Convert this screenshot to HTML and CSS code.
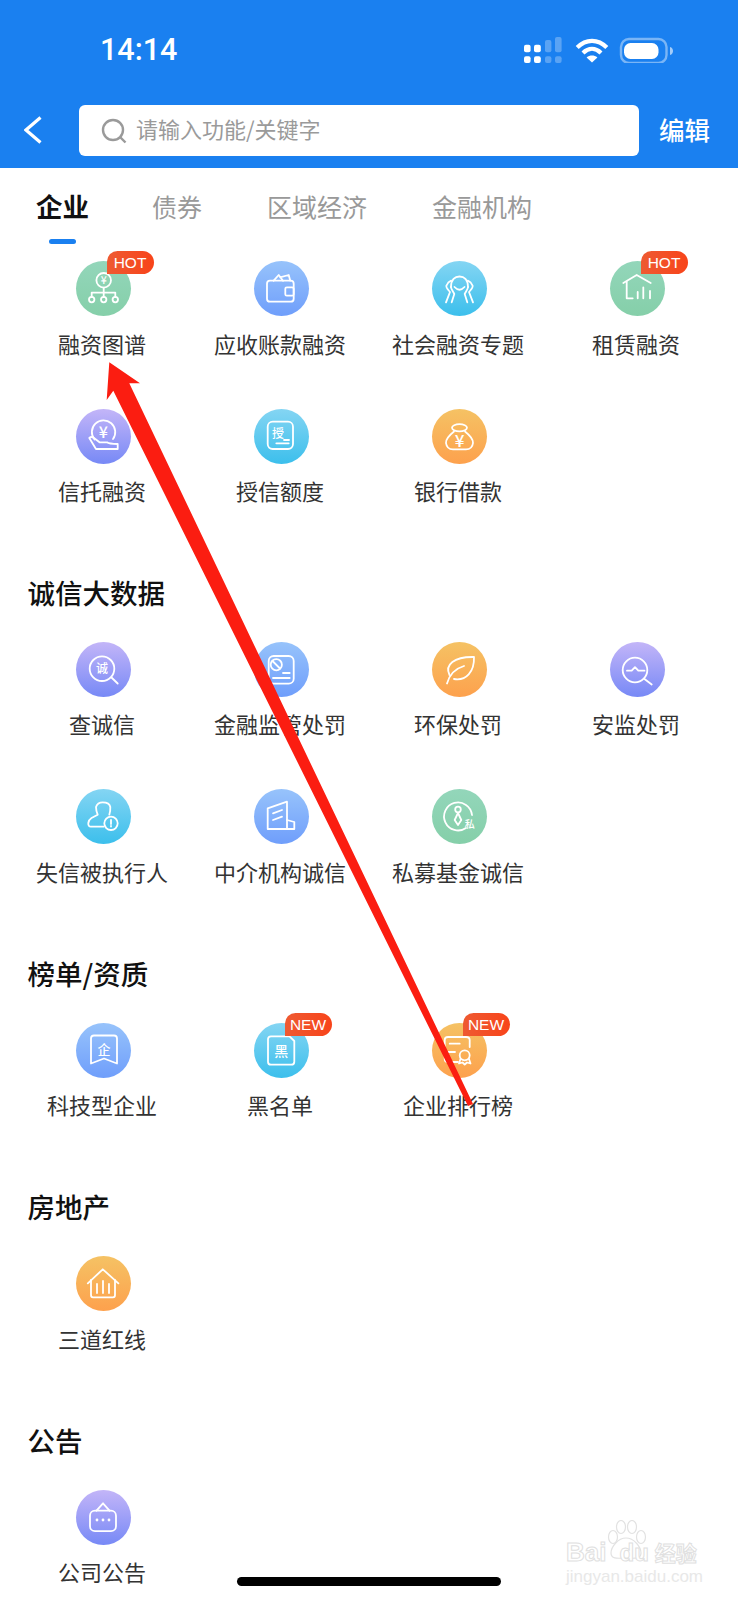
FILE: index.html
```html
<!DOCTYPE html>
<html lang="zh-CN">
<head>
    <meta charset="UTF-8">
    <meta name="viewport" content="width=device-width, initial-scale=1.0">
    <title>全部功能</title>
    <link rel="stylesheet" href="styles.css">
</head>
<body>
    <header class="app-header">
        <div class="status-bar">
            <span class="clock">14:14</span>
            <svg class="status-icons" width="150" height="26" viewBox="0 0 150 26">
                <!-- signal -->
                <g fill="#fff">
                    <rect x="0" y="7.7" width="6.6" height="7.6" rx="2"/>
                    <rect x="10" y="7.7" width="6.8" height="7.6" rx="2"/>
                    <rect x="0" y="19.3" width="6.6" height="6.7" rx="2"/>
                    <rect x="10" y="19.3" width="6.8" height="6.7" rx="2"/>
                </g>
                <g fill="#fff" opacity="0.28">
                    <rect x="21" y="3" width="6.4" height="12.3" rx="2"/>
                    <rect x="31" y="0" width="6.6" height="15.3" rx="2"/>
                    <rect x="21" y="19.3" width="6.4" height="6.7" rx="2"/>
                    <rect x="31" y="19.3" width="6.6" height="6.7" rx="2"/>
                </g>
                <!-- wifi -->
                <g fill="none" stroke="#fff" stroke-width="4.2">
                    <path d="M53.2 10.5 C62 1.6 74 1.6 82.8 10.5"/>
                    <path d="M59 16 C64.5 10.6 71.5 10.6 77 16"/>
                </g>
                <path d="M62.6 20.4 C65.8 17.8 70.2 17.8 73.4 20.4 L68 25.4 Z" fill="#fff"/>
                <!-- battery -->
                <rect x="97" y="2" width="45.5" height="24" rx="8" fill="none" stroke="#fff" stroke-opacity="0.42" stroke-width="2.4"/>
                <rect x="100" y="6" width="34.5" height="16" rx="6.5" fill="#fff"/>
                <path d="M146 10 C150 11 150 17 146 18 Z" fill="#fff" opacity="0.6"/>
            </svg>
        </div>
        <div class="nav-bar">
            <svg class="back" width="18" height="28" viewBox="0 0 18 28">
                <path d="M16.5 1.5 L2 14 L16.5 26.5" fill="none" stroke="#fff" stroke-width="3.2"/>
            </svg>
            <div class="search-box">
                <svg width="26" height="26" viewBox="0 0 26 26">
                    <circle cx="12" cy="12" r="10" fill="none" stroke="#9a9a9a" stroke-width="2.4"/>
                    <path d="M19.5 19.5 L24.5 24.5" stroke="#9a9a9a" stroke-width="2.4"/>
                </svg>
                <span class="placeholder">请输入功能/关键字</span>
            </div>
            <span class="edit">编辑</span>
        </div>
    </header>

    <nav class="tabs">
        <span class="tab active">企业</span>
        <span class="tab">债券</span>
        <span class="tab">区域经济</span>
        <span class="tab">金融机构</span>
    </nav>

    <section class="group">
        <div class="grid">
            <div class="item">
                <div class="badge-icon green">
                    <svg class="glyph" viewBox="0 0 55 55">
                        <circle cx="27.7" cy="19.3" r="7.3"/>
                        <text class="glyph-text" x="27.7" y="23" font-size="10.5">¥</text>
                        <path d="M27.7 26.6 V36 M15.7 36 V31.6 H39.3 V36"/>
                        <circle cx="15.7" cy="38.6" r="2.7"/>
                        <circle cx="27.7" cy="38.6" r="2.7"/>
                        <circle cx="39.3" cy="38.6" r="2.7"/>
                    </svg>
                    <span class="tag">HOT</span>
                </div>
                <span class="label">融资图谱</span>
            </div>
            <div class="item">
                <div class="badge-icon blue">
                    <svg class="glyph" viewBox="0 0 55 55">
                        <rect x="13" y="19.7" width="26.7" height="21" rx="3"/>
                        <rect x="31.3" y="26.3" width="8.4" height="8.4" rx="1.5"/>
                        <path d="M19.7 19.7 L24.7 14 L29 19.7 M26 16.3 L34.7 14 L36.3 19.7"/>
                    </svg>
                </div>
                <span class="label">应收账款融资</span>
            </div>
            <div class="item">
                <div class="badge-icon cyan">
                    <svg class="glyph" viewBox="0 0 55 55">
                        <path d="M19 26 C19 18.5 23 15.5 27.5 15.5 C32 15.5 36 18.5 36 26"/>
                        <path d="M14 41.3 L18 31 C16 28.5 13.5 26.5 14.5 24.5 C15.3 22.5 17 20.5 19.2 19.7"/>
                        <path d="M41 41.3 L37 31 C39 28.5 41.5 26.5 40.5 24.5 C39.7 22.5 38 20.5 35.8 19.7"/>
                        <path d="M19.7 41.3 L22.3 33 C21 30.5 19 28 19 26 M35.3 41.3 L32.7 33 C34 30.5 36 28 36 26"/>
                        <path d="M22.5 26 Q27.5 31.5 32.5 26"/>
                    </svg>
                </div>
                <span class="label">社会融资专题</span>
            </div>
            <div class="item">
                <div class="badge-icon green">
                    <svg class="glyph" viewBox="0 0 55 55">
                        <path d="M13.3 22 L26.7 14 L40.7 22"/>
                        <path d="M16.7 20.7 V37.3 H22.7 M27.7 31 V37.3 M33.3 26.3 V37.3 M40 30 V37.3"/>
                    </svg>
                    <span class="tag">HOT</span>
                </div>
                <span class="label">租赁融资</span>
            </div>
            <div class="item">
                <div class="badge-icon purple">
                    <svg class="glyph" viewBox="0 0 55 55">
                        <path d="M18.5 30.5 A11.7 11.7 0 1 1 37 30"/>
                        <text class="glyph-text" x="27.3" y="28.5" font-size="16">¥</text>
                        <path d="M13.3 29 Q15.5 27 18 29 L23.5 33.3 H31 Q33 35 41.7 35 V40 H20 Z"/>
                    </svg>
                </div>
                <span class="label">信托融资</span>
            </div>
            <div class="item">
                <div class="badge-icon cyan">
                    <svg class="glyph" viewBox="0 0 55 55">
                        <rect x="13.7" y="12.7" width="25.3" height="27.3" rx="5"/>
                        <text class="glyph-text" x="24" y="29" font-size="12">授</text>
                        <path d="M30 31 H35 M22.3 34.3 H34.7"/>
                    </svg>
                </div>
                <span class="label">授信额度</span>
            </div>
            <div class="item">
                <div class="badge-icon orange">
                    <svg class="glyph" viewBox="0 0 55 55">
                        <ellipse cx="27.5" cy="18.8" rx="7.5" ry="3.6"/>
                        <path d="M22 22.5 C17 26.5 13.7 31 14 34 C14.5 38 17 40.3 21 40.3 H34 C38 40.3 40.5 38 41 34 C41.3 31 38 26.5 33 22.5"/>
                        <text class="glyph-text" x="27.5" y="37.5" font-size="17">¥</text>
                    </svg>
                </div>
                <span class="label">银行借款</span>
            </div>
        </div>
    </section>

    <section class="group">
        <h2>诚信大数据</h2>
        <div class="grid">
            <div class="item">
                <div class="badge-icon purple">
                    <svg class="glyph" viewBox="0 0 55 55">
                        <circle cx="26" cy="26.7" r="12.3"/>
                        <path d="M35.5 35.5 L41.7 41.5"/>
                        <text class="glyph-text" x="26" y="31" font-size="12">诚</text>
                    </svg>
                </div>
                <span class="label">查诚信</span>
            </div>
            <div class="item">
                <div class="badge-icon blue">
                    <svg class="glyph" viewBox="0 0 55 55">
                        <rect x="14.7" y="14" width="25" height="27.7" rx="5"/>
                        <circle cx="22.3" cy="22.7" r="5.6"/>
                        <path d="M18.5 19 L26 26.5 M29 31 H35.7 M19 36 H35.7"/>
                    </svg>
                </div>
                <span class="label">金融监管处罚</span>
            </div>
            <div class="item">
                <div class="badge-icon orange">
                    <svg class="glyph" viewBox="0 0 55 55">
                        <path d="M17.5 33 C12.5 23 22 14.5 42 15 C42.5 30 34 39 22 37"/>
                        <path d="M15 41.5 C17.5 32.5 23.5 26.5 32 24"/>
                    </svg>
                </div>
                <span class="label">环保处罚</span>
            </div>
            <div class="item">
                <div class="badge-icon purple">
                    <svg class="glyph" viewBox="0 0 55 55">
                        <circle cx="25" cy="28" r="12.3"/>
                        <path d="M34.5 37 L41.7 42.5"/>
                        <path d="M17 28.7 H21.7 L25 25.2 L28.3 28.7 H34.5"/>
                    </svg>
                </div>
                <span class="label">安监处罚</span>
            </div>
            <div class="item">
                <div class="badge-icon cyan">
                    <svg class="glyph" viewBox="0 0 55 55">
                        <path d="M27.7 37.7 H15 Q12 37.5 12.3 34 Q13 30.5 15.5 29 L21.7 25.7 Q20 21.5 20 18 Q21.5 13.3 26.7 13.3 Q33.5 13.3 34.3 18 Q34.5 22 33.3 25.7"/>
                        <circle cx="35" cy="34.3" r="6.7"/>
                        <path d="M35 31 V35 M35 37 V37.6"/>
                    </svg>
                </div>
                <span class="label">失信被执行人</span>
            </div>
            <div class="item">
                <div class="badge-icon blue">
                    <svg class="glyph" viewBox="0 0 55 55">
                        <path d="M13.7 40 V19.3 L33 12.7 V40 Z"/>
                        <path d="M33 31 L40.3 33 V40 H33"/>
                        <path d="M19 24.3 L28 21 M19 31 L28 27.7"/>
                    </svg>
                </div>
                <span class="label">中介机构诚信</span>
            </div>
            <div class="item">
                <div class="badge-icon green">
                    <svg class="glyph" viewBox="0 0 55 55">
                        <path d="M34 39 A14 14 0 1 1 40 26"/>
                        <circle cx="26" cy="20.5" r="2.8"/>
                        <path d="M26 24 L22.7 31 L26 36 L29.3 31 Z"/>
                        <text class="glyph-text" x="37.7" y="38.5" font-size="10">私</text>
                    </svg>
                </div>
                <span class="label">私募基金诚信</span>
            </div>
        </div>
    </section>

    <section class="group">
        <h2>榜单/资质</h2>
        <div class="grid">
            <div class="item">
                <div class="badge-icon blue">
                    <svg class="glyph" viewBox="0 0 55 55">
                        <path d="M15 15.5 Q15 12.5 18 12.5 H38 Q41 12.5 41 15.5 V40.5 L28 35.5 L15 40.5 Z"/>
                        <text class="glyph-text" x="28" y="30.5" font-size="13">企</text>
                    </svg>
                </div>
                <span class="label">科技型企业</span>
            </div>
            <div class="item">
                <div class="badge-icon cyan">
                    <svg class="glyph" viewBox="0 0 55 55">
                        <path d="M35.5 13.3 H17 Q14 13.3 14 16.3 V38.7 Q14 41.7 17 41.7 H37.3 Q40.3 41.7 40.3 38.7 V18 Z"/>
                        <text class="glyph-text" x="27.2" y="32.5" font-size="14">黑</text>
                    </svg>
                    <span class="tag">NEW</span>
                </div>
                <span class="label">黑名单</span>
            </div>
            <div class="item">
                <div class="badge-icon orange">
                    <svg class="glyph" viewBox="0 0 55 55">
                        <path d="M26 39 H16 Q12.7 39 12.7 36 V17 Q12.7 14 16 14 H34 Q37.7 14 37.7 17 V24"/>
                        <path d="M17.7 20.7 H27.7 M16 29 H23"/>
                        <circle cx="32.7" cy="32.3" r="5"/>
                        <path d="M28.5 36 L27 40.5 L30.5 39.5 L32.7 41.5 L35 39.5 L38.5 40.5 L37 36"/>
                    </svg>
                    <span class="tag">NEW</span>
                </div>
                <span class="label">企业排行榜</span>
            </div>
        </div>
    </section>

    <section class="group">
        <h2>房地产</h2>
        <div class="grid">
            <div class="item">
                <div class="badge-icon orange">
                    <svg class="glyph" viewBox="0 0 55 55">
                        <path d="M11.8 27.3 L26.8 13.3 L42.4 27.3"/>
                        <path d="M15 24 V39 Q15 41.3 17 41.3 H37 Q39 41.3 39 39 V24"/>
                        <path d="M21 28 V37 M27 25 V37 M33 28 V37"/>
                    </svg>
                </div>
                <span class="label">三道红线</span>
            </div>
        </div>
    </section>

    <section class="group">
        <h2>公告</h2>
        <div class="grid">
            <div class="item">
                <div class="badge-icon purple">
                    <svg class="glyph" viewBox="0 0 55 55">
                        <rect x="14" y="20.7" width="26" height="20.5" rx="5"/>
                        <path d="M20.5 20.7 L27 13.3 L33.5 20.7"/>
                        <circle class="dot" cx="21" cy="30" r="1.4"/>
                        <circle class="dot" cx="27" cy="30" r="1.4"/>
                        <circle class="dot" cx="33" cy="30" r="1.4"/>
                    </svg>
                </div>
                <span class="label">公司公告</span>
            </div>
        </div>
    </section>

    <!-- red pointer drawn over the page -->
    <svg class="pointer" width="738" height="1600" viewBox="0 0 738 1600">
        <polygon fill="#fb1d11" points="109.3,362.3 140,383.3 129.3,383.3 473,1104 468,1106 113.3,390.7 106.7,400"/>
    </svg>

    <div class="watermark">
        <svg class="paw" width="44" height="42" viewBox="0 0 44 42">
            <g fill="#fff" stroke="#e2e2e2" stroke-width="1.2">
                <ellipse cx="9" cy="17" rx="4.5" ry="6.5"/>
                <ellipse cx="17" cy="7" rx="4.5" ry="6.5"/>
                <ellipse cx="28" cy="7" rx="4.5" ry="6.5"/>
                <ellipse cx="37" cy="17" rx="4.5" ry="6.5"/>
                <path d="M22 18 C30 18 37 27 37 33 C37 40 28 38 22 38 C16 38 7 40 7 33 C7 27 14 18 22 18 Z"/>
            </g>
        </svg>
        <div class="wm-brand">Bai<span class="wm-du">du</span><span class="wm-cn">经验</span></div>
        <div class="wm-url">jingyan.baidu.com</div>
    </div>

    <div class="home-bar"></div>
</body>
</html>
```

FILE: styles.css
```css
html, body {
    margin: 0;
    padding: 0;
}
body {
    position: relative;
    width: 738px;
    height: 1600px;
    overflow: hidden;
    background: #fff;
    font-family: "Noto Sans CJK SC", "Noto Sans", sans-serif;
    color: #333;
}

/* blue header */
.app-header {
    height: 168px;
    background: #1a80f0;
    color: #fff;
}
.status-bar {
    height: 100px;
    display: flex;
    align-items: center;
    justify-content: space-between;
    padding: 0 62px 0 100px;
}
.clock {
    font-family: Roboto, "Liberation Sans", sans-serif;
    font-size: 30.5px;
    font-weight: 500;
    line-height: 36px;
}
.status-icons {
    margin-right: 2px;
}
.nav-bar {
    display: flex;
    align-items: center;
    height: 51px;
    margin-top: 5px;
    padding-left: 24px;
}
.back {
    flex: none;
    margin-top: -2px;
}
.search-box {
    display: flex;
    align-items: center;
    gap: 9px;
    width: 560px;
    height: 51px;
    margin-left: 37px;
    padding-left: 22px;
    box-sizing: border-box;
    background: #fff;
    border-radius: 6px;
}
.placeholder {
    padding-bottom: 6px;
    font-size: 22px;
    line-height: 30px;
    color: #9a9a9a;
}
.edit {
    margin-left: 20px;
    padding-bottom: 4px;
    font-size: 25.5px;
    line-height: 36px;
    font-weight: 500;
}

/* tabs */
.tabs {
    display: flex;
    align-items: flex-start;
    gap: 65px;
    height: 73px;
    padding: 20px 0 0 36px;
}
.tab {
    display: flex;
    flex-direction: column;
    align-items: center;
    font-size: 25px;
    line-height: 36px;
    color: #999;
}
.tab.active {
    margin-right: -2px;
    color: #111;
    font-size: 26.5px;
    font-weight: 700;
}
.tab.active::after {
    content: "";
    width: 27px;
    height: 5px;
    margin-top: 15px;
    background: #1a80f0;
    border-radius: 3px;
}

/* sections */
.group h2 {
    margin: 0 0 34px;
    padding-left: 27.5px;
    font-size: 27.5px;
    font-weight: 500;
    line-height: 32px;
    color: #111;
}
.grid {
    display: grid;
    grid-template-columns: repeat(4, 178px);
    row-gap: 47.5px;
    padding-left: 14px;
    margin-bottom: 67.4px;
}
.item {
    display: flex;
    flex-direction: column;
    align-items: center;
    height: 100px;
}
.label {
    margin: 11.5px 2px 0 0;
    font-size: 22px;
    line-height: 30px;
    color: #333;
    white-space: nowrap;
}

/* round icons */
.badge-icon {
    position: relative;
    width: 55px;
    height: 55px;
    border-radius: 50%;
}
.green { background: linear-gradient(#93d6ba, #85cfa9); }
.blue { background: linear-gradient(#97c3fb, #6f9efb); }
.cyan { background: linear-gradient(#84d5f3, #3cbfec); }
.purple { background: linear-gradient(#c3b5f8, #7789f6); }
.orange { background: linear-gradient(#f5c264, #fda14d); }

.glyph {
    display: block;
    width: 55px;
    height: 55px;
    fill: none;
    stroke: #fff;
    stroke-width: 1.8;
    stroke-linejoin: round;
    stroke-linecap: round;
}
.glyph-text {
    fill: #fff;
    stroke: none;
    text-anchor: middle;
    font-family: "Noto Sans CJK SC", sans-serif;
    font-weight: 500;
}
.glyph .dot {
    fill: #fff;
    stroke: none;
}

.tag {
    position: absolute;
    top: -10px;
    left: 31px;
    width: 47px;
    height: 23px;
    box-sizing: border-box;
    font-family: "Liberation Sans", sans-serif;
    font-size: 15.5px;
    line-height: 23px;
    text-align: center;
    color: #fff;
    background: linear-gradient(90deg, #ee5a32, #f8441a);
    border-radius: 11px 12px 12px 0;
}

/* overlays */
.pointer {
    position: absolute;
    top: 0;
    left: 0;
    pointer-events: none;
}
.watermark {
    position: absolute;
    left: 566px;
    top: 1520px;
    width: 135px;
    height: 66px;
}
.paw {
    position: absolute;
    left: 38px;
    top: 0;
}
.wm-brand {
    position: absolute;
    left: 0;
    top: 16px;
    font-family: "Liberation Sans", "Noto Sans CJK SC", sans-serif;
    font-size: 26px;
    font-weight: 700;
    line-height: 32px;
    color: #fff;
    -webkit-text-stroke: 1px #e0e0e0;
    white-space: nowrap;
}
.wm-du {
    margin-left: 13px;
    font-size: 24px;
}
.wm-cn {
    margin-left: 6px;
    font-size: 21px;
}
.wm-url {
    position: absolute;
    left: 0;
    top: 48px;
    font-family: "Liberation Sans", sans-serif;
    font-size: 17px;
    line-height: 18px;
    color: #e8e8e8;
    white-space: nowrap;
}
.home-bar {
    position: absolute;
    left: 237px;
    top: 1577px;
    width: 264px;
    height: 9px;
    background: #000;
    border-radius: 5px;
}
```
